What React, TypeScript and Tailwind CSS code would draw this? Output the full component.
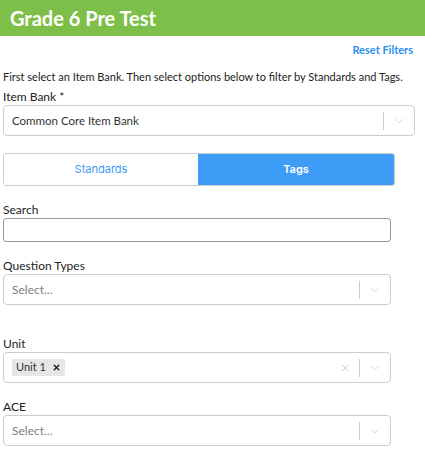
import { ChevronDown, X } from 'lucide-react';

const font = { fontFamily: 'Lato, "Open Sans", sans-serif' };

function Chevron() {
  return <ChevronDown className="w-[14px] h-[14px] text-[#cccccc]" strokeWidth={1.5} />;
}

function Select({ placeholder, width }: { placeholder: string; width: string }) {
  return (
    <div className={`${width} h-[31px] border border-[#cccccc] rounded-[4px] bg-white flex items-center`}>
      <span className="flex-1 pl-[8px] text-[12px] text-[#808080]">{placeholder}</span>
      <span className="w-px h-[18px] bg-[#cccccc]" />
      <span className="w-[30px] flex justify-center">
        <Chevron />
      </span>
    </div>
  );
}

export default function App() {
  return (
    <div className="w-[425px] h-[464px] bg-white overflow-hidden text-[#222222]" style={font}>

      {/* Header */}
      <div className="h-[36px] bg-[#7dbf48] flex items-center px-[10px]">
        <h1 className="text-[20px] font-bold text-white leading-none">Grade 6 Pre Test</h1>
      </div>

      <div className="px-[3px]">
        <div className="flex justify-end pr-[9px] pt-[6px] leading-[15px]">
          <span className="text-[11px] font-bold text-[#2b8ff0]">Reset Filters</span>
        </div>

        <p className="text-[11px] mt-[12px] leading-[15px] whitespace-nowrap">
          First select an Item Bank. Then select options below to filter by Standards and Tags.
        </p>

        {/* Item bank */}
        <div className="mt-[5px] text-[12px] leading-[16px]">Item Bank *</div>
        <div className="w-[412px] h-[31px] border border-[#cccccc] rounded-[4px] bg-white flex items-center">
          <span className="flex-1 pl-[8px] text-[11.5px] text-[#333333]">Common Core Item Bank</span>
          <span className="w-px h-[18px] bg-[#cccccc]" />
          <span className="w-[30px] flex justify-center">
            <Chevron />
          </span>
        </div>

        {/* Tabs */}
        <div className="mt-[17px] w-[392px] h-[33px] flex rounded-[3px] border border-[#cccccc] overflow-hidden" style={{ fontFamily: 'Inter, Roboto, sans-serif' }}>
          <div className="flex-1 flex items-center justify-center text-[11px] text-[#3d9cf5] bg-white">Standards</div>
          <div className="w-[196px] flex items-center justify-center text-[11px] font-semibold text-white bg-[#3d9cf5]">Tags</div>
        </div>

        {/* Search */}
        <div className="mt-[16px] text-[12px] leading-[16px]">Search</div>
        <div className="w-[388px] h-[24px] border border-[#999999] rounded-[3px] bg-white" />

        {/* Question types */}
        <div className="mt-[16px] text-[12px] leading-[16px]">Question Types</div>
        <div>
          <Select placeholder="Select..." width="w-[388px]" />
        </div>

        {/* Unit */}
        <div className="mt-[31px] text-[12px] leading-[16px]">Unit</div>
        <div className="w-[388px] h-[31px] border border-[#cccccc] rounded-[4px] bg-white flex items-center">
          <div className="flex-1 pl-[8px] flex">
            <span className="h-[17px] px-[4px] bg-[#e6e6e6] rounded-[2px] flex items-center gap-[6px] text-[11px] text-[#333333]">
              Unit 1
              <X className="w-[9px] h-[9px] text-[#111111]" strokeWidth={3.5} />
            </span>
          </div>
          <span className="w-[28px] flex justify-center">
            <X className="w-[12px] h-[12px] text-[#cccccc]" strokeWidth={2} />
          </span>
          <span className="w-px h-[18px] bg-[#cccccc]" />
          <span className="w-[30px] flex justify-center">
            <Chevron />
          </span>
        </div>

        {/* ACE */}
        <div className="mt-[16px] text-[12px] leading-[16px]">ACE</div>
        <div>
          <Select placeholder="Select..." width="w-[388px]" />
        </div>
      </div>
    </div>
  );
}
